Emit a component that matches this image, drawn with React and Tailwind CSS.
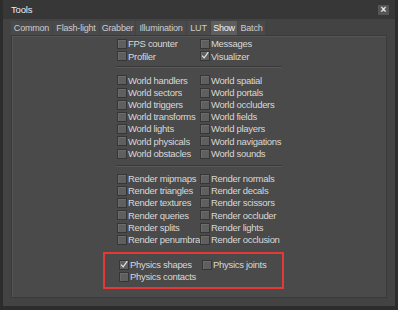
import React from 'react';

const font = { fontFamily: '"Liberation Sans", Arial, sans-serif' };

const Check = ({ checked }) => (
    <span className="w-[10px] h-[10px] shrink-0 bg-[#5f5f5f] border border-[#363636] shadow-[inset_1px_1px_0_#6c6c6c] flex items-center justify-center">
        {checked && (
            <svg width="9" height="9" viewBox="0 0 9 9" className="-mt-[1px]">
                <path d="M1.2 4.6 L3.6 7.2 L8.2 0.8" fill="none" stroke="#e6e6e6" strokeWidth="1.3" />
            </svg>
        )}
    </span>
);

const Item = ({ label, checked }) => (
    <div className="h-[12.2px] flex items-center gap-[1px] whitespace-nowrap">
        <Check checked={checked} />
        <span className="text-[9.5px] tracking-[-0.3px] leading-none text-[#d8d8d8]">{label}</span>
    </div>
);

const Grid = ({ rows }) => (
    <div className="grid grid-cols-[83px_1fr] pl-[1px]">
        {rows.map(([a, b], i) => (
            <React.Fragment key={i}>
                {a ? <Item label={a[0]} checked={a[1]} /> : <div />}
                {b ? <Item label={b[0]} checked={b[1]} /> : <div />}
            </React.Fragment>
        ))}
    </div>
);

const Sep = ({ className }) => (
    <div className={'h-[2px] border-t border-[#393939] border-b border-b-[#595959] ' + className} />
);

const tabs = [
    { label: 'Common', w: 'w-[41px]' },
    { label: 'Flash-light', w: 'w-[46px]' },
    { label: 'Grabber', w: 'w-[35px]' },
    { label: 'Illumination', w: 'w-[50px]' },
    { label: 'LUT', w: 'w-[23px]' },
    { label: 'Show', w: 'w-[26px]', active: true },
    { label: 'Batch', w: 'w-[27px]' },
];

const App = () => {
    const top = [
        [['FPS counter'], ['Messages']],
        [['Profiler'], ['Visualizer', true]],
    ];
    const world = [
        [['World handlers'], ['World spatial']],
        [['World sectors'], ['World portals']],
        [['World triggers'], ['World occluders']],
        [['World transforms'], ['World fields']],
        [['World lights'], ['World players']],
        [['World physicals'], ['World navigations']],
        [['World obstacles'], ['World sounds']],
    ];
    const render = [
        [['Render mipmaps'], ['Render normals']],
        [['Render triangles'], ['Render decals']],
        [['Render textures'], ['Render scissors']],
        [['Render queries'], ['Render occluder']],
        [['Render splits'], ['Render lights']],
        [['Render penumbra'], ['Render occlusion']],
    ];
    const physics = [
        [['Physics shapes', true], ['Physics joints']],
        [['Physics contacts'], null],
    ];

    return (
        <div style={font} className="w-[398px] h-[310px] bg-[#2c2c2c] p-[0_3px_4px_3px] flex flex-col overflow-hidden">
            {/* title bar */}
            <div className="h-[19px] shrink-0 bg-[#373737] flex items-center justify-between pl-[8px] pr-[6px]">
                <span className="text-[9.5px] tracking-[-0.2px] text-[#ececec] leading-none">Tools</span>
                <span className="w-[11px] h-[10px] bg-[#555] flex items-center justify-center text-[#f0f0f0] text-[10px] leading-none font-bold">×</span>
            </div>

            {/* body */}
            <div className="flex-1 bg-[#434343] flex flex-col px-[8px] pt-[2px] pb-[8px]">
                <div className="flex h-[14px] gap-[1px] shrink-0">
                    {tabs.map((t) => (
                        <div
                            key={t.label}
                            className={clsxLite(
                                t.w,
                                'flex items-center justify-center whitespace-nowrap text-[9px] tracking-[-0.2px] leading-none',
                                t.active ? 'bg-[#5e5e5e] text-[#f2f2f2]' : 'bg-[#4a4a4a] text-[#cccccc]'
                            )}
                        >
                            {t.label}
                        </div>
                    ))}
                </div>

                <div className="flex-1 bg-[#4a4a4a] border border-[#3a3a3a] shadow-[inset_1px_1px_0_#555] flex justify-center pt-[2px]">
                    <div className="w-[166px] flex flex-col">
                        <Grid rows={top} />
                        <Sep className="mt-[4px] mb-[6px]" />
                        <Grid rows={world} />
                        <Sep className="mt-[5px] mb-[6px]" />
                        <Grid rows={render} />
                        <div className="mt-[6px] ml-[-13px] w-[181px] border-2 border-[#e53935] pl-[13px] pt-[5px] pb-[4px]">
                            <Grid rows={physics} />
                        </div>
                    </div>
                </div>
            </div>
        </div>
    );
};

const clsxLite = (...c) => c.filter(Boolean).join(' ');

export default App;
